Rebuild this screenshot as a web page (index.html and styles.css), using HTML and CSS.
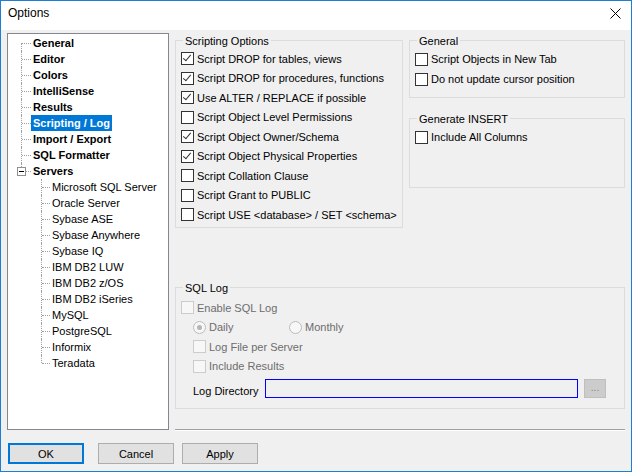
FILE: index.html
```html
<!DOCTYPE html>
<html lang="en">
<head>
    <meta charset="UTF-8">
    <title>Options</title>
    <link rel="stylesheet" href="styles.css">
</head>
<body>
    <div class="window">
        <div class="titlebar">
            <span class="title">Options</span>
            <svg class="close" width="11" height="11" viewBox="0 0 11 11">
                <path d="M0.5 0.5 L10.5 10.5 M10.5 0.5 L0.5 10.5" stroke="#000" stroke-width="1" fill="none"/>
            </svg>
        </div>
        <div class="main">
            <!-- Left tree -->
            <div class="tree">
                <ul class="tree-root">
                    <li><span class="node">General</span></li>
                    <li><span class="node">Editor</span></li>
                    <li><span class="node">Colors</span></li>
                    <li><span class="node">IntelliSense</span></li>
                    <li><span class="node">Results</span></li>
                    <li><span class="node selected">Scripting / Log</span></li>
                    <li><span class="node">Import / Export</span></li>
                    <li><span class="node">SQL Formatter</span></li>
                    <li class="expanded">
                        <span class="expander"></span>
                        <span class="node">Servers</span>
                        <ul class="tree-sub">
                            <li><span class="node">Microsoft SQL Server</span></li>
                            <li><span class="node">Oracle Server</span></li>
                            <li><span class="node">Sybase ASE</span></li>
                            <li><span class="node">Sybase Anywhere</span></li>
                            <li><span class="node">Sybase IQ</span></li>
                            <li><span class="node">IBM DB2 LUW</span></li>
                            <li><span class="node">IBM DB2 z/OS</span></li>
                            <li><span class="node">IBM DB2 iSeries</span></li>
                            <li><span class="node">MySQL</span></li>
                            <li><span class="node">PostgreSQL</span></li>
                            <li><span class="node">Informix</span></li>
                            <li><span class="node">Teradata</span></li>
                        </ul>
                    </li>
                </ul>
            </div>

            <!-- Right pane -->
            <div class="pane">
                <div class="top-row">
                    <div class="group scripting">
                        <div class="group-title">Scripting Options</div>
                        <div class="row"><span class="check checked"></span>Script DROP for tables, views</div>
                        <div class="row"><span class="check checked"></span>Script DROP for procedures, functions</div>
                        <div class="row"><span class="check checked"></span>Use ALTER / REPLACE if possible</div>
                        <div class="row"><span class="check"></span>Script Object Level Permissions</div>
                        <div class="row"><span class="check checked"></span>Script Object Owner/Schema</div>
                        <div class="row"><span class="check checked"></span>Script Object Physical Properties</div>
                        <div class="row"><span class="check"></span>Script Collation Clause</div>
                        <div class="row"><span class="check"></span>Script Grant to PUBLIC</div>
                        <div class="row"><span class="check"></span>Script USE &lt;database&gt; / SET &lt;schema&gt;</div>
                    </div>
                    <div class="side">
                        <div class="group general">
                            <div class="group-title">General</div>
                            <div class="row tall"><span class="check"></span>Script Objects in New Tab</div>
                            <div class="row tall"><span class="check"></span>Do not update cursor position</div>
                        </div>
                        <div class="group insert">
                            <div class="group-title">Generate INSERT</div>
                            <div class="row tall"><span class="check"></span>Include All Columns</div>
                        </div>
                    </div>
                </div>

                <div class="group sqllog">
                    <div class="group-title">SQL Log</div>
                    <div class="row disabled first"><span class="check"></span>Enable SQL Log</div>
                    <div class="row disabled indent">
                        <span class="radio-item"><span class="radio on"></span>Daily</span>
                        <span class="radio-item"><span class="radio"></span>Monthly</span>
                    </div>
                    <div class="row disabled indent"><span class="check"></span>Log File per Server</div>
                    <div class="row disabled indent"><span class="check"></span>Include Results</div>
                    <div class="dir-row">
                        <span class="dir-label">Log Directory</span>
                        <span class="dir-input"></span>
                        <span class="browse">...</span>
                    </div>
                </div>

                <div class="separator"></div>
            </div>
        </div>

        <div class="buttons">
            <button class="btn default">OK</button>
            <button class="btn cancel">Cancel</button>
            <button class="btn apply">Apply</button>
        </div>
    </div>
</body>
</html>
```
FILE: styles.css
```css
body {
    margin: 0;
    padding: 0;
    background: #f0f0f0;
    font-family: 'Liberation Sans', Arial, sans-serif;
    font-size: 11px;
    color: #000;
}
.window {
    box-sizing: border-box;
    width: 632px;
    height: 472px;
    border: 1px solid #1c7fd4;
    background: #f0f0f0;
}
.titlebar {
    height: 29px;
    background: #fff;
    display: flex;
    align-items: center;
    justify-content: space-between;
    padding: 0 10px 0 7px;
}
.title {
    font-size: 12px;
    margin-top: -5px;
}
.close {
    margin-top: -4px;
}
.main {
    display: flex;
    padding: 3px 6px 0 6px;
}

/* tree */
.tree {
    box-sizing: border-box;
    width: 162px;
    height: 397px;
    background: #fff;
    border: 1px solid #828790;
    padding-top: 1px;
}
.tree ul {
    list-style: none;
    margin: 0;
    padding: 0;
}
.tree li {
    position: relative;
    line-height: 16px;
}
.tree-root > li {
    padding-left: 23px;
    font-weight: bold;
}
.tree-root > li::before {
    content: "";
    position: absolute;
    left: 13px;
    top: 0;
    bottom: 0;
    border-left: 1px dotted #a0a0a0;
}
.tree-root > li:first-child::before {
    top: 8px;
}
.tree-root > li:last-child::before {
    bottom: auto;
    height: 8px;
}
.tree-root > li::after {
    content: "";
    position: absolute;
    left: 14px;
    top: 8px;
    width: 9px;
    border-top: 1px dotted #a0a0a0;
}
.tree-sub {
    margin-left: -23px !important;
}
.tree-sub > li {
    padding-left: 42px;
    font-weight: normal;
}
.tree-sub > li::before {
    content: "";
    position: absolute;
    left: 33px;
    top: 0;
    bottom: 0;
    border-left: 1px dotted #a0a0a0;
}
.tree-sub > li:last-child::before {
    bottom: auto;
    height: 8px;
}
.tree-sub > li::after {
    content: "";
    position: absolute;
    left: 34px;
    top: 8px;
    width: 8px;
    border-top: 1px dotted #a0a0a0;
}
.node {
    display: inline-block;
    padding: 0 2px;
    height: 16px;
}
.node.selected {
    background: #0078d7;
    color: #fff;
}
.expander {
    position: absolute;
    left: 9px;
    top: 4px;
    width: 7px;
    height: 7px;
    border: 1px solid #919191;
    background: #fff;
    z-index: 1;
}
.expander::after {
    content: "";
    position: absolute;
    left: 1px;
    top: 3px;
    width: 5px;
    border-top: 1px solid #000;
}

/* right pane */
.pane {
    width: 450px;
    margin-left: 6px;
    padding-top: 7px;
}
.top-row {
    display: flex;
}
.side {
    margin-left: 6px;
    width: 216px;
}
.group {
    box-sizing: border-box;
    border: 1px solid #dcdcdc;
    padding: 0 5px;
}
.group-title {
    width: fit-content;
    height: 16px;
    line-height: 16px;
    margin: -8px 0 0 2px;
    padding: 0 2px;
    background: #f0f0f0;
}
.scripting {
    width: 228px;
    height: 188px;
}
.general {
    height: 58px;
}
.insert {
    margin-top: 20px;
    height: 70px;
}
.row {
    display: flex;
    align-items: center;
    height: 19.5px;
    white-space: nowrap;
}
.row.tall {
    height: 20px;
}
.row.first {
    margin-top: 2px;
}
.row.indent {
    padding-left: 12px;
}
.check {
    box-sizing: border-box;
    width: 13px;
    height: 13px;
    border: 1px solid #333;
    background: #fff;
    margin-right: 3px;
    flex: none;
    position: relative;
}
.check.checked::after {
    content: "";
    position: absolute;
    left: 3px;
    top: 0px;
    width: 3px;
    height: 7px;
    border-right: 1px solid #333;
    border-bottom: 1px solid #333;
    transform: rotate(40deg);
}
.disabled {
    color: #6d6d6d;
}
.disabled .check {
    border-color: #cccccc;
    background: #f7f7f7;
}
.radio-item {
    display: flex;
    align-items: center;
    width: 96px;
}
.radio {
    box-sizing: border-box;
    width: 13px;
    height: 13px;
    border-radius: 50%;
    border: 1px solid #bcbcbc;
    background: #f7f7f7;
    margin-right: 3px;
    position: relative;
}
.radio.on::after {
    content: "";
    position: absolute;
    left: 3px;
    top: 3px;
    width: 5px;
    height: 5px;
    border-radius: 50%;
    background: #b5b5b5;
}
.sqllog {
    margin-top: 59px;
    height: 122px;
}
.dir-row {
    display: flex;
    align-items: center;
    margin-top: 3px;
    padding-left: 12px;
}
.dir-label {
    width: 72px;
    margin-top: 5px;
}
.dir-input {
    box-sizing: border-box;
    width: 313px;
    height: 19px;
    border: 1px solid #0000ff;
    background: #f0f0f0;
}
.browse {
    box-sizing: border-box;
    margin-left: 6px;
    width: 22px;
    height: 19px;
    background: #cccccc;
    border: 1px solid #bfbfbf;
    color: #838383;
    text-align: center;
    line-height: 15px;
    font-size: 10px;
}
.separator {
    margin-top: 20px;
    border-top: 1px solid #a0a0a0;
    border-bottom: 1px solid #fff;
}

/* buttons */
.buttons {
    display: flex;
    padding-left: 7px;
    margin-top: 12px;
}
.btn {
    box-sizing: border-box;
    width: 76px;
    height: 21px;
    background: #e1e1e1;
    border: 1px solid #adadad;
    font-family: inherit;
    font-size: 11px;
    color: #000;
    padding: 0;
}
.btn.default {
    border: 2px solid #0078d7;
}
.btn.cancel {
    margin-left: 14px;
}
.btn.apply {
    margin-left: 8px;
}
```
